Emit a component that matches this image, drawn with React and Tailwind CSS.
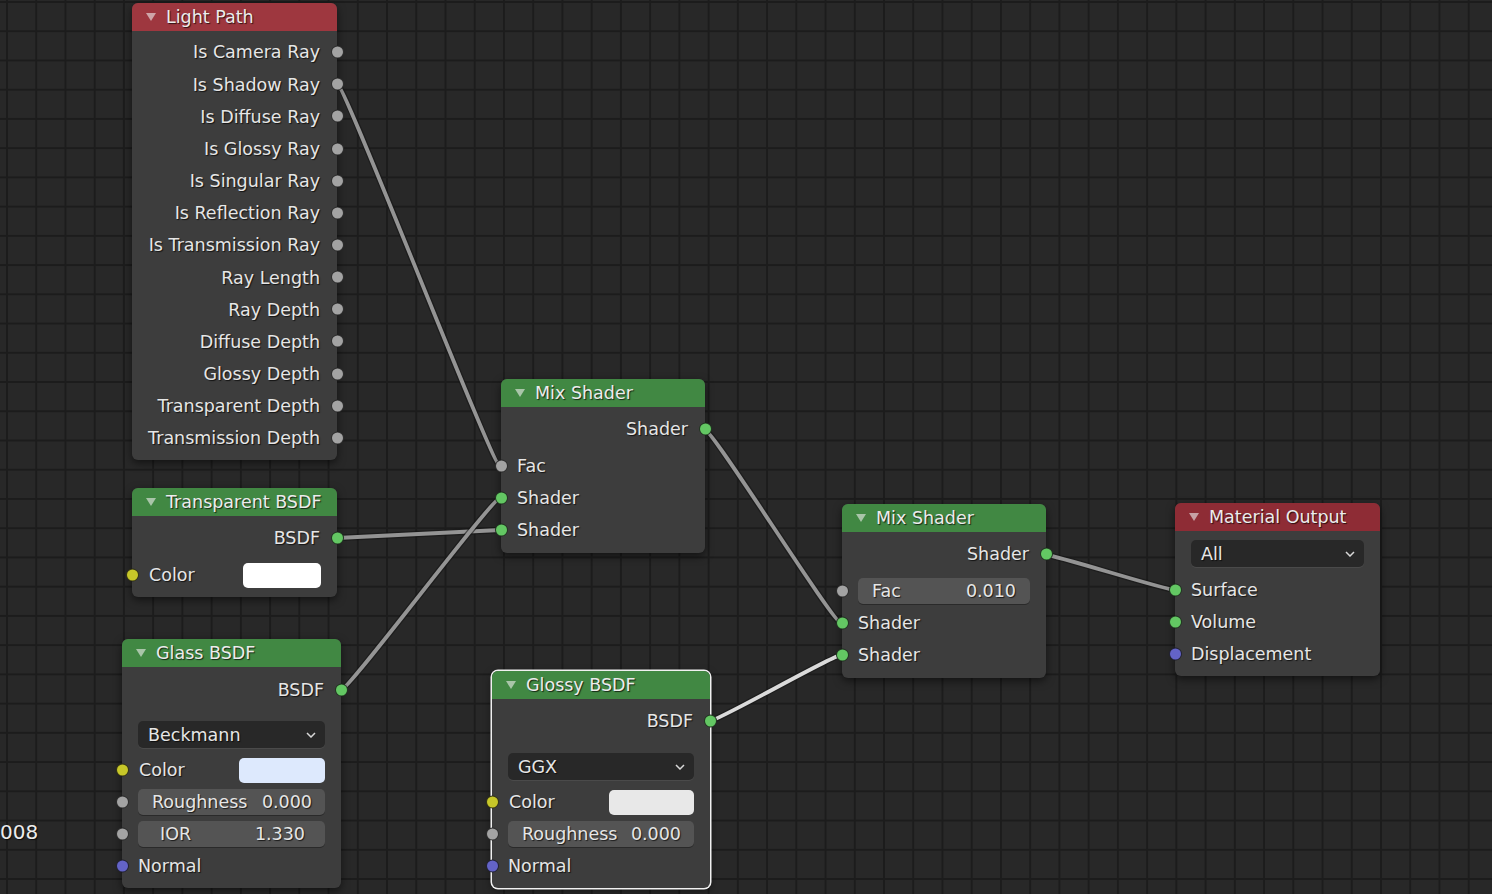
import React from 'react'

const sockColor = {
  grey: 'bg-[#a3a3a3]',
  green: 'bg-[#63c763]',
  yellow: 'bg-[#c7c729]',
  purple: 'bg-[#6363c7]',
}

const txt = "pt-[1px] [text-shadow:1px_1px_1px_rgba(0,0,0,0.7)]"

const Socket = ({ color, side }) => (
  <span
    className={`absolute top-1/2 -translate-y-1/2 w-[13px] h-[13px] rounded-full border border-[#111]/80 ${
      side === 'right' ? '-right-[6.5px]' : '-left-[6.5px]'
    } ${sockColor[color]}`}
  />
)

const Header = ({ title, color }) => (
  <div className={`h-[28px] rounded-t-[6px] flex items-center pl-[14px] ${color}`}>
    <svg width="10" height="8" viewBox="0 0 10 8" className="mr-[10px] opacity-60">
      <polygon points="0,0 10,0 5,8" fill="#eee" />
    </svg>
    <span className="text-[17.5px] text-[#ececec] [text-shadow:1px_1px_1px_rgba(0,0,0,0.7)]">{title}</span>
  </div>
)

const OutRow = ({ label, color = 'green', h = 'h-[32px]' }) => (
  <div className={`relative ${h} flex items-center justify-end pr-[17px]`}>
    <span className={txt}>{label}</span>
    <Socket color={color} side="right" />
  </div>
)

const InRow = ({ label, color = 'green' }) => (
  <div className="relative h-[32px] flex items-center pl-[16px]">
    <span className={txt}>{label}</span>
    <Socket color={color} side="left" />
  </div>
)

const ColorRow = ({ swatch, w }) => (
  <div className="relative h-[32px] flex items-center justify-between pl-[17px] pr-[16px]">
    <span className={txt}>Color</span>
    <span className={`h-[25px] rounded-[5px] ${w} ${swatch}`} />
    <Socket color="yellow" side="left" />
  </div>
)

const Field = ({ label, value, pl = 'pl-[14px]', pr = 'pr-[13px]' }) => (
  <div className="relative h-[32px] flex items-center px-[16px]">
    <div className={`flex-1 h-[26px] rounded-[5px] bg-[#545454] shadow-[0_1px_0_#2a2a2a] flex items-center justify-between ${pl} ${pr}`}>
      <span className={txt}>{label}</span>
      <span className={txt}>{value}</span>
    </div>
    <Socket color="grey" side="left" />
  </div>
)

const Dropdown = ({ label, mt }) => (
  <div className={`px-[16px] ${mt}`}>
    <div className="h-[27px] rounded-[5px] bg-[#282828] shadow-[0_1px_0_#4a4a4a] flex items-center justify-between pl-[10px] pr-[9px]">
      <span className={txt}>{label}</span>
      <svg width="10" height="6" viewBox="0 0 10 6">
        <polyline points="1,1 5,5 9,1" fill="none" stroke="#d8d8d8" strokeWidth="1.5" />
      </svg>
    </div>
  </div>
)

// nodes sit on a free canvas, so they keep their own coordinates
const nodeBase =
  "absolute rounded-[6px] bg-[#3d3d3d] shadow-[0_3px_8px_rgba(0,0,0,0.55)] text-[17.5px] text-[#e6e6e6] font-['DejaVu_Sans','Noto_Sans',sans-serif]"

const RED = 'bg-[#9e373f]'
const RED2 = 'bg-[#8e2c35]'
const GREEN = 'bg-[#418843]'

const lightPathOutputs = [
  'Is Camera Ray',
  'Is Shadow Ray',
  'Is Diffuse Ray',
  'Is Glossy Ray',
  'Is Singular Ray',
  'Is Reflection Ray',
  'Is Transmission Ray',
  'Ray Length',
  'Ray Depth',
  'Diffuse Depth',
  'Glossy Depth',
  'Transparent Depth',
  'Transmission Depth',
]

const links = [
  { d: 'M337,84 C345,84 492,466 500,466' },
  { d: 'M337,538 C345,538 492,530 500,530' },
  { d: 'M341,690 C349,690 492,498 500,498' },
  { d: 'M705,430 C713,430 833,623 841,623' },
  { d: 'M710,721 C718,721 833,655 841,655', hi: true },
  { d: 'M1046,555 C1056,555 1165,590 1175,590' },
]

const App = () => {
  return (
    <div className="relative w-[1492px] h-[894px] overflow-hidden bg-[#282828] bg-[linear-gradient(to_right,#1c1c1c_2px,transparent_2px),linear-gradient(to_bottom,#1c1c1c_2px,transparent_2px)] [background-size:29.24px_29.24px] [background-position:6px_1px] font-['DejaVu_Sans',sans-serif]">
      {/* Links */}
      <svg className="absolute inset-0" width="1492" height="894">
        {links.map((l, i) => (
          <g key={i}>
            <path d={l.d} fill="none" stroke="#161616" strokeOpacity="0.6" strokeWidth="6.5" />
            <path d={l.d} fill="none" stroke={l.hi ? '#dadada' : '#949494'} strokeWidth="3.8" />
          </g>
        ))}
      </svg>

      {/* Clipped label at the left edge */}
      <span className="absolute left-0 top-[817px] text-[20px] text-[#ececec] [text-shadow:1px_1px_1px_rgba(0,0,0,0.7)]">008</span>

      {/* Light Path */}
      <div className={`${nodeBase} left-[132px] top-[3px] w-[205px]`}>
        <Header title="Light Path" color={RED} />
        <div className="pt-[5px] pb-[6px]">
          {lightPathOutputs.map((o) => (
            <OutRow key={o} label={o} color="grey" h="h-[32.17px]" />
          ))}
        </div>
      </div>

      {/* Transparent BSDF */}
      <div className={`${nodeBase} left-[132px] top-[488px] w-[205px]`}>
        <Header title="Transparent BSDF" color={GREEN} />
        <div className="pt-[6px] pb-[6px] flex flex-col gap-[5px]">
          <OutRow label="BSDF" />
          <ColorRow swatch="bg-white" w="w-[78px]" />
        </div>
      </div>

      {/* Glass BSDF */}
      <div className={`${nodeBase} left-[122px] top-[639px] w-[219px]`}>
        <Header title="Glass BSDF" color={GREEN} />
        <div className="pt-[7px] pb-[6px]">
          <OutRow label="BSDF" />
          <Dropdown label="Beckmann" mt="mt-[15px] mb-[6px]" />
          <ColorRow swatch="bg-[#dde9fd]" w="w-[86px]" />
          <Field label="Roughness" value="0.000" />
          <Field label="IOR" value="1.330" pl="pl-[22px]" pr="pr-[20px]" />
          <InRow label="Normal" color="purple" />
        </div>
      </div>

      {/* Mix Shader 1 */}
      <div className={`${nodeBase} left-[501px] top-[379px] w-[204px]`}>
        <Header title="Mix Shader" color={GREEN} />
        <div className="pt-[6px] pb-[7px] flex flex-col gap-[5px]">
          <OutRow label="Shader" />
          <div>
            <InRow label="Fac" color="grey" />
            <InRow label="Shader" />
            <InRow label="Shader" />
          </div>
        </div>
      </div>

      {/* Glossy BSDF (selected) */}
      <div className={`${nodeBase} left-[492px] top-[671px] w-[218px] ring-[1.5px] ring-[#f0f0f0]`}>
        <Header title="Glossy BSDF" color={GREEN} />
        <div className="pt-[6px] pb-[6px]">
          <OutRow label="BSDF" />
          <Dropdown label="GGX" mt="mt-[16px] mb-[6px]" />
          <ColorRow swatch="bg-[#e8e8e8]" w="w-[85px]" />
          <Field label="Roughness" value="0.000" />
          <InRow label="Normal" color="purple" />
        </div>
      </div>

      {/* Mix Shader 2 */}
      <div className={`${nodeBase} left-[842px] top-[504px] w-[204px]`}>
        <Header title="Mix Shader" color={GREEN} />
        <div className="pt-[6px] pb-[7px] flex flex-col gap-[5px]">
          <OutRow label="Shader" />
          <div>
            <Field label="Fac" value="0.010" pr="pr-[14px]" />
            <InRow label="Shader" />
            <InRow label="Shader" />
          </div>
        </div>
      </div>

      {/* Material Output */}
      <div className={`${nodeBase} left-[1175px] top-[503px] w-[205px]`}>
        <Header title="Material Output" color={RED2} />
        <div className="pt-[9px] pb-[6px] flex flex-col gap-[7px]">
          <Dropdown label="All" mt="mt-0" />
          <div>
            <InRow label="Surface" />
            <InRow label="Volume" />
            <InRow label="Displacement" color="purple" />
          </div>
        </div>
      </div>
    </div>
  )
}

export default App
